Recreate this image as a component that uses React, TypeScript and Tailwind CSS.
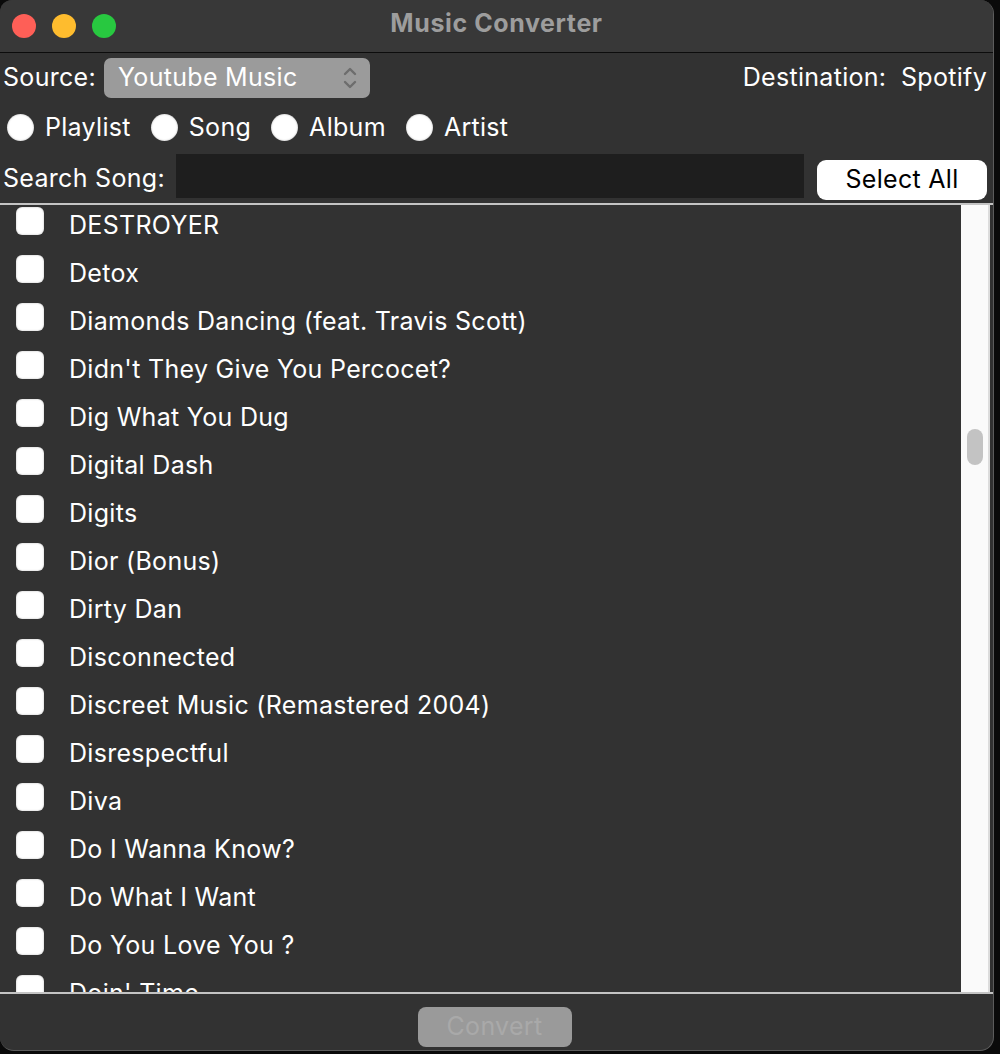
import React from "react";

const songs = [
  "DESTROYER",
  "Detox",
  "Diamonds Dancing (feat. Travis Scott)",
  "Didn't They Give You Percocet?",
  "Dig What You Dug",
  "Digital Dash",
  "Digits",
  "Dior (Bonus)",
  "Dirty Dan",
  "Disconnected",
  "Discreet Music (Remastered 2004)",
  "Disrespectful",
  "Diva",
  "Do I Wanna Know?",
  "Do What I Want",
  "Do You Love You ?",
  "Doin' Time",
];

const font = { fontFamily: "Inter, 'Noto Sans', sans-serif" };

const App: React.FC = () => {
  return (
    <div className="w-[1000px] h-[1054px] bg-[#0a0a0a] overflow-hidden" style={font}>
      <div className="w-[994px] h-[1051px] bg-[#323232] rounded-tl-[12px] rounded-tr-[14px] rounded-br-[14px] rounded-bl-[14px] border-r border-b border-[#5c5c5c] overflow-hidden flex flex-col">
        {/* title bar */}
        <div className="relative h-[53px] shrink-0 bg-[#383838] border-b border-[#0c0c0c] flex items-center">
          <div className="flex items-center gap-[16px] pl-[12px]">
            <span className="w-[24px] h-[24px] rounded-full bg-[#fe5f57]" />
            <span className="w-[24px] h-[24px] rounded-full bg-[#febc2e]" />
            <span className="w-[24px] h-[24px] rounded-full bg-[#28c840]" />
          </div>
          <div className="absolute inset-0 flex items-center justify-center pb-[4px] text-[25px] font-bold text-[#9d9d9d] tracking-[0.6px]">
            Music Converter
          </div>
        </div>

        {/* source row */}
        <div className="h-[48px] shrink-0 flex items-center pl-[3px] pr-[6px] pt-[1px] text-[25px] tracking-[0.3px] text-white">
          <span>Source:</span>
          <div className="ml-[8px] w-[266px] h-[40px] rounded-[7px] bg-[#9b9b9b] flex items-center justify-between pl-[14px] pr-[12px]">
            <span>Youtube Music</span>
            <svg width="16" height="26" viewBox="0 0 16 26" fill="none" stroke="#6d6d6d" strokeWidth="2.4" strokeLinecap="round" strokeLinejoin="round">
              <path d="M3 9 L8 4 L13 9" />
              <path d="M3 17 L8 22 L13 17" />
            </svg>
          </div>
          <span className="ml-auto whitespace-pre">Destination:  Spotify</span>
        </div>

        {/* radio row */}
        <div className="h-[52px] shrink-0 flex items-center pl-[7px] pt-[1px] text-[25px] tracking-[0.3px] text-white">
          {["Playlist", "Song", "Album", "Artist"].map((l) => (
            <label key={l} className="flex items-center mr-[20px]">
              <span className="w-[27px] h-[27px] rounded-full bg-white shadow-[inset_0_0_2px_rgba(0,0,0,0.35)]" />
              <span className="ml-[11px]">{l}</span>
            </label>
          ))}
        </div>

        {/* search row */}
        <div className="h-[50px] shrink-0 flex items-center pl-[3px] pr-[6px] pt-[2px] text-[25px] tracking-[0.3px]">
          <span className="text-white">Search Song:</span>
          <div className="ml-[11px] mb-[6px] w-[628px] h-[44px] bg-[#1e1e1e]" />
          <button className="ml-auto mt-[2px] w-[170px] h-[40px] rounded-[9px] bg-white text-black flex items-center justify-center">
            Select All
          </button>
        </div>

        {/* list */}
        <div className="h-[791px] shrink-0 border-y-[2px] border-[#c4c4c4] flex">
          <div className="flex-1 overflow-hidden pt-[2px]">
            {songs.map((s) => (
              <div key={s} className="h-[48px] flex items-start pl-[16px]">
                <span className="w-[28px] h-[28px] rounded-[6px] bg-white shrink-0 shadow-[inset_0_0_2px_rgba(0,0,0,0.3)]" />
                <span className="ml-[25px] mt-[3px] text-[25px] tracking-[0.3px] leading-[30px] text-white whitespace-nowrap">{s}</span>
              </div>
            ))}
          </div>
          <div className="w-[29px] shrink-0 bg-[#fafafa] border-r-[2px] border-[#dcdcdc] pt-[224px] flex justify-center">
            <div className="w-[16px] h-[36px] rounded-full bg-[#c3c3c3]" />
          </div>
          <div className="w-[3px] shrink-0 bg-[#323232]" />
        </div>

        {/* bottom bar */}
        <div className="flex-1 flex items-start justify-center pt-[13px] pr-[4px]">
          <button className="w-[154px] h-[40px] rounded-[8px] bg-[#9a9a9a] text-[25px] tracking-[0.3px] text-[#a9a9a9] flex items-center justify-center">
            Convert
          </button>
        </div>
      </div>
    </div>
  );
};

export default App;
